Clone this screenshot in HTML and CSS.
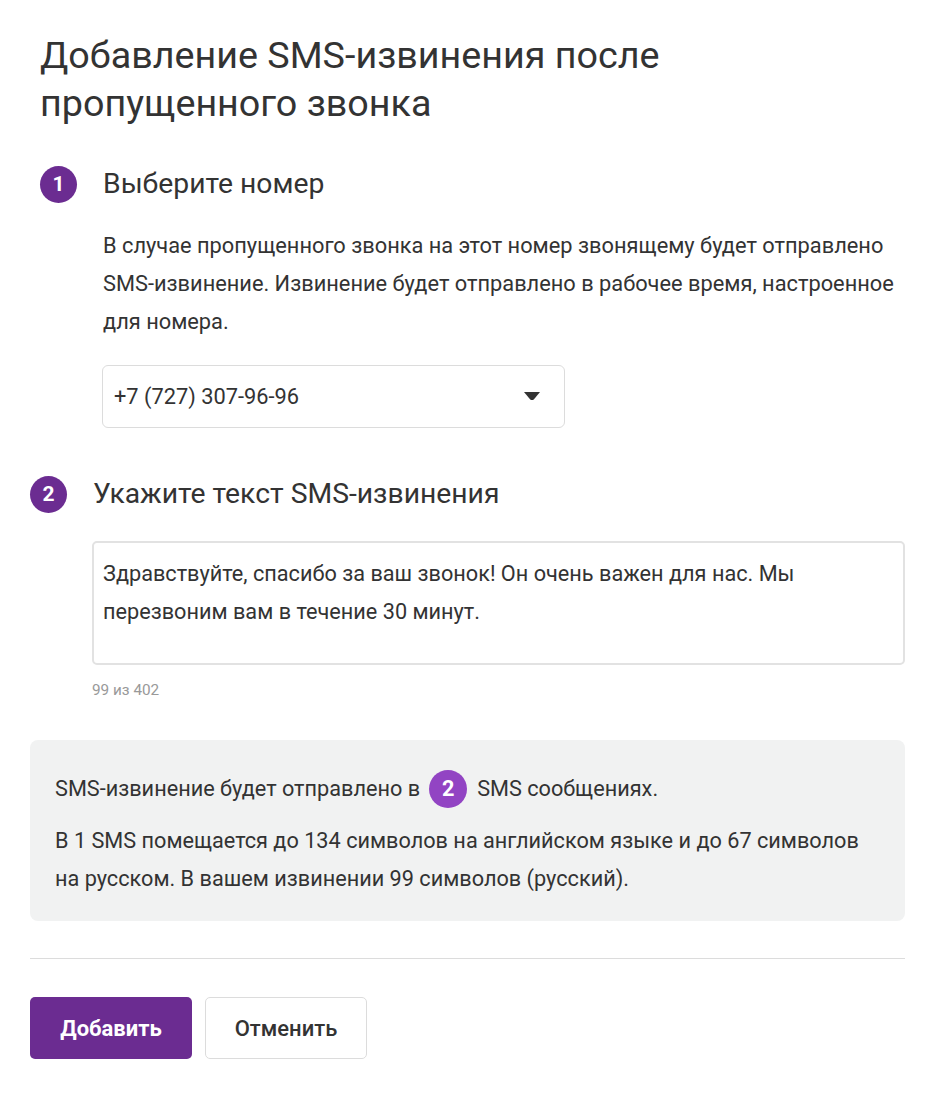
FILE: index.html
```html
<!DOCTYPE html>
<html lang="ru">
<head>
<meta charset="utf-8">
<link rel="stylesheet" href="styles.css">
</head>
<body>
<main class="page">
  <h1 class="title">Добавление SMS-извинения после пропущенного звонка</h1>

  <section class="step step-one">
    <div class="step-head">
      <span class="num">1</span>
      <h2 class="step-title">Выберите номер</h2>
    </div>
    <div class="step-body">
      <p class="desc">В случае пропущенного звонка на этот номер звонящему будет отправлено SMS-извинение. Извинение будет отправлено в рабочее время, настроенное для номера.</p>
      <div class="select">
        <span class="select-value">+7 (727) 307-96-96</span>
        <svg class="caret" width="16" height="9" viewBox="0 0 16 9"><path d="M0 0H16L10 7.2Q8 9 6 7.2Z" fill="#333"/></svg>
      </div>
    </div>
  </section>

  <section class="step step-two">
    <div class="step-head">
      <span class="num">2</span>
      <h2 class="step-title">Укажите текст SMS-извинения</h2>
    </div>
    <div class="step-body">
      <div class="textarea">Здравствуйте, спасибо за ваш звонок! Он очень важен для нас. Мы перезвоним вам в течение 30 минут.</div>
      <div class="counter">99 из 402</div>
    </div>
  </section>

  <div class="info">
    <p class="info-line">SMS-извинение будет отправлено в <span class="badge">2</span> SMS сообщениях.</p>
    <p class="info-text">В 1 SMS помещается до 134 символов на английском языке и до 67 символов на русском. В вашем извинении 99 символов (русский).</p>
  </div>

  <hr class="divider">

  <div class="actions">
    <button class="btn btn-primary">Добавить</button>
    <button class="btn btn-secondary">Отменить</button>
  </div>
</main>
</body>
</html>
```

FILE: styles.css
```css
* { box-sizing: border-box; }
body {
  margin: 0;
  background: #fff;
  font-family: Roboto, "Noto Sans", sans-serif;
  color: #333;
}
.page {
  width: 946px;
  padding: 31px 41px 0 30px;
}
.title {
  margin: 0 0 0 10px;
  font-size: 37.7px;
  line-height: 48px;
  font-weight: 400;
  color: #333;
  width: 680px;
}
.step-one { margin-top: 39px; padding-left: 10px; }
.step-two { margin-top: 48px; }
.step-head {
  display: flex;
  align-items: center;
  gap: 26px;
  height: 36px;
}
.num {
  width: 37px;
  height: 37px;
  border-radius: 50%;
  background: #6b2c91;
  color: #fff;
  font-weight: 700;
  font-size: 21px;
  display: flex;
  align-items: center;
  justify-content: center;
  flex: none;
}
.step-title {
  margin: 0;
  font-size: 28.3px;
  font-weight: 400;
  line-height: 36px;
}
.step-body { padding-left: 62px; }
.desc {
  margin: 25px 0 0 1px;
  font-size: 21.8px;
  line-height: 38px;
  width: 800px;
}
.select {
  margin-top: 24px;
  width: 463px;
  height: 63px;
  border: 1px solid #dcdcdc;
  border-radius: 6px;
  display: flex;
  align-items: center;
  justify-content: space-between;
  padding: 0 24px 0 11px;
  font-size: 21.8px;
}
.caret { display: block; }
.textarea {
  margin-top: 29px;
  width: 813px;
  height: 124px;
  border: 2px solid #e2e2e2;
  border-radius: 5px;
  padding: 12px 9px;
  font-size: 21.7px;
  line-height: 38px;
}
.counter {
  margin-top: 15px;
  font-size: 15.3px;
  color: #999;
  line-height: 20px;
}
.info {
  margin-top: 40px;
  background: #f1f2f2;
  border-radius: 8px;
  padding: 30px 25px 23px;
  font-size: 21.7px;
}
.info p { margin: 0; }
.info-line {
  display: flex;
  align-items: center;
  line-height: 38px;
}
.badge {
  width: 38px;
  height: 38px;
  border-radius: 50%;
  background: #9244c3;
  color: #fff;
  font-weight: 700;
  display: inline-flex;
  align-items: center;
  justify-content: center;
  margin: 0 10px 0 9px;
}
.info-text {
  margin-top: 14px !important;
  line-height: 38px;
}
.divider {
  margin: 37px 0 0;
  border: 0;
  border-top: 1px solid #dcdcdc;
}
.actions {
  display: flex;
  gap: 13px;
  margin-top: 38px;
}
.btn {
  height: 62px;
  width: 162px;
  border-radius: 5px;
  font-family: Roboto, "Noto Sans", sans-serif;
  font-size: 22px;
  font-weight: 500;
  cursor: pointer;
}
.btn-primary {
  background: #6b2c91;
  color: #fff;
  border: 0;
  font-weight: 700;
}
.btn-secondary {
  background: #fff;
  color: #333;
  border: 1px solid #dcdcdc;
}
```
